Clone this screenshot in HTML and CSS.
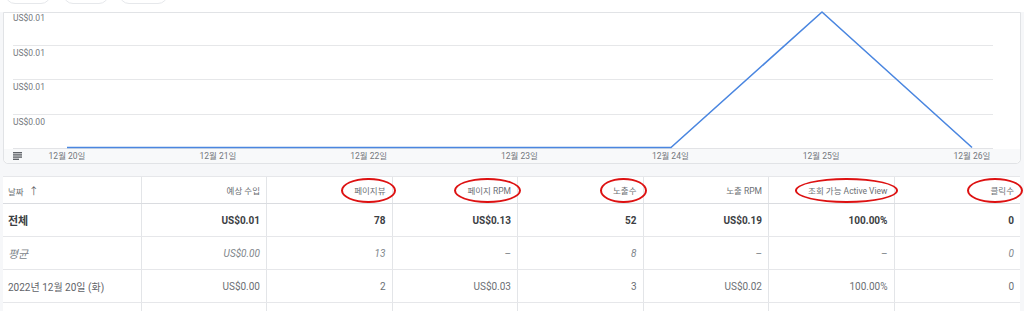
FILE: index.html
```html
<!DOCTYPE html>
<html lang="ko">
<head>
<meta charset="utf-8">
<title>보고서</title>
<link rel="stylesheet" href="styles.css">
</head>
<body>
<div class="toolbar">
  <span class="pill p1"></span>
  <span class="pill p2"></span>
  <span class="pill p3"></span>
</div>
<div class="card">
  <div class="plot">
    <div class="band b1"><span class="ylabel">US$0.01</span></div>
    <div class="band b2"><span class="ylabel">US$0.01</span></div>
    <div class="band b3"><span class="ylabel">US$0.01</span></div>
    <div class="band b4"><span class="ylabel">US$0.00</span></div>
    <svg class="series" width="1016" height="136" viewBox="0 0 1016 136">
      <polyline points="63,134.5 667,134.5 818,-1 968,134.5" fill="none" stroke="#4a86e0" stroke-width="1.6" stroke-linejoin="round"/>
    </svg>
  </div>
  <div class="axis">
    <svg class="legend-icon" width="9" height="8" viewBox="0 0 9 8">
      <rect x="0" y="0" width="9" height="1.4" fill="#5f6368"/>
      <rect x="0" y="2.2" width="9" height="1.4" fill="#5f6368"/>
      <rect x="0" y="4.4" width="9" height="1.4" fill="#5f6368"/>
      <rect x="0" y="6.6" width="6" height="1.4" fill="#5f6368"/>
    </svg>
    <div class="ticks">
      <span class="tick"><span>12월 20일</span></span>
      <span class="tick"><span>12월 21일</span></span>
      <span class="tick"><span>12월 22일</span></span>
      <span class="tick"><span>12월 23일</span></span>
      <span class="tick"><span>12월 24일</span></span>
      <span class="tick"><span>12월 25일</span></span>
      <span class="tick"><span>12월 26일</span></span>
    </div>
  </div>
</div>
<div class="gap"></div>
<table class="report">
  <colgroup>
    <col class="c1"><col class="cn"><col class="cn"><col class="cn"><col class="cn"><col class="cn"><col class="cn"><col class="cl">
  </colgroup>
  <thead>
    <tr>
      <th class="left">날짜 <span class="arrow">↑</span></th>
      <th>예상 수입</th>
      <th><span class="circled">페이지뷰</span></th>
      <th><span class="circled">페이지 RPM</span></th>
      <th><span class="circled">노출수</span></th>
      <th>노출 RPM</th>
      <th><span class="circled">조회 가능 Active View</span></th>
      <th><span class="circled wide">클릭수</span></th>
    </tr>
  </thead>
  <tbody>
    <tr class="total">
      <td class="left">전체</td>
      <td>US$0.01</td>
      <td>78</td>
      <td>US$0.13</td>
      <td>52</td>
      <td>US$0.19</td>
      <td>100.00%</td>
      <td>0</td>
    </tr>
    <tr class="avg">
      <td class="left">평균</td>
      <td>US$0.00</td>
      <td>13</td>
      <td class="dash">–</td>
      <td>8</td>
      <td class="dash">–</td>
      <td class="dash">–</td>
      <td>0</td>
    </tr>
    <tr class="row">
      <td class="left">2022년 12월 20일 (화)</td>
      <td>US$0.00</td>
      <td>2</td>
      <td>US$0.03</td>
      <td>3</td>
      <td>US$0.02</td>
      <td>100.00%</td>
      <td>0</td>
    </tr>
    <tr class="row">
      <td class="left"></td>
      <td></td><td></td><td></td><td></td><td></td><td></td><td></td>
    </tr>
  </tbody>
</table>
</body>
</html>
```
FILE: styles.css
```css
html, body {
  margin: 0;
  padding: 0;
}
body {
  width: 1024px;
  height: 311px;
  overflow: hidden;
  background: #f6f7f9;
  font-family: Roboto, "Noto Sans CJK KR", sans-serif;
  color: #5f6368;
}
.toolbar {
  display: flex;
  gap: 11px;
  height: 12px;
  padding-left: 5px;
  background: #ffffff;
  overflow: hidden;
}
.pill {
  display: block;
  height: 20px;
  margin-top: -18px;
  border: 1px solid #e6e8eb;
  border-radius: 10px;
  background: #fff;
}
.p1 { width: 44px; }
.p2 { width: 44px; margin-left: 1px; }
.p3 { width: 47px; margin-left: -1px; }

.card {
  margin-left: 3px;
  width: 1016px;
  background: #fff;
  border: 1px solid #e1e3e6;
  border-radius: 0 0 5px 5px;
}
.plot {
  position: relative;
  height: 136px;
}
.band {
  box-sizing: border-box;
  margin-left: 9px;
  width: 980px;
  border-bottom: 1px solid #e6e7e9;
  padding-top: 1px;
}
.b1 { height: 33px; padding-top: 0; }
.b2 { height: 34px; padding-top: 2px; }
.b3 { height: 35px; padding-top: 2px; }
.b4 { height: 34px; padding-top: 2px; border-bottom-color: #e2e3e6; }
.ylabel {
  display: block;
  font-size: 8.5px;
  line-height: 10px;
  color: #73777c;
}
.series {
  position: absolute;
  left: 0;
  top: 0;
  overflow: visible;
}
.axis {
  display: flex;
  align-items: center;
  height: 14px;
  padding-left: 9px;
  background: #f8f9fa;
  border-radius: 0 0 5px 5px;
}
.legend-icon {
  display: block;
  flex: none;
}
.ticks {
  display: flex;
  justify-content: space-between;
  flex: none;
  width: 905px;
  margin-left: 45px;
}
.tick {
  display: flex;
  justify-content: center;
  width: 0;
  white-space: nowrap;
  font-size: 8.5px;
  line-height: 14px;
  color: #73777c;
}

.gap {
  height: 12px;
}

.report {
  margin-left: 3px;
  width: 1017px;
  table-layout: fixed;
  border-collapse: collapse;
  background: #fff;
  font-size: 10px;
}
.c1 { width: 138px; }
.cn { width: 125.5px; }
.cl { width: 126px; }
.report th, .report td {
  text-align: right;
  padding: 0 6px 0 5px;
  border-left: 1px solid #e3e5e8;
  white-space: nowrap;
}
.report th:first-child, .report td:first-child {
  border-left: none;
}
.report .left {
  text-align: left;
}
.report th {
  height: 26px;
  font-weight: 400;
  font-size: 8.5px;
  color: #6b6f74;
  border-bottom: 1px solid #dadce0;
  border-top: 1px solid #e6e7ea;
}
.arrow {
  font-size: 10px;
  color: #5f6368;
  margin-left: 3px;
}
.report td {
  height: 32px;
  border-bottom: 1px solid #e6e7ea;
  color: #6b6f74;
}
.total td {
  font-weight: 700;
  color: #3c4043;
}
.total td.left {
  font-size: 11px;
}
.avg td {
  font-style: italic;
  color: #80868b;
}
.avg td.dash {
  font-style: normal;
}
.avg td.left {
  font-size: 11px;
}
.row td.left {
  font-size: 10px;
  color: #5f6368;
}
.circled {
  position: relative;
}
.circled::after {
  content: "";
  position: absolute;
  left: -13px;
  right: -10px;
  top: -8px;
  bottom: -7px;
  border: 2.5px solid #dd1111;
  border-radius: 50%;
}
.circled.wide::after {
  left: -24px;
  right: -9px;
}
```
